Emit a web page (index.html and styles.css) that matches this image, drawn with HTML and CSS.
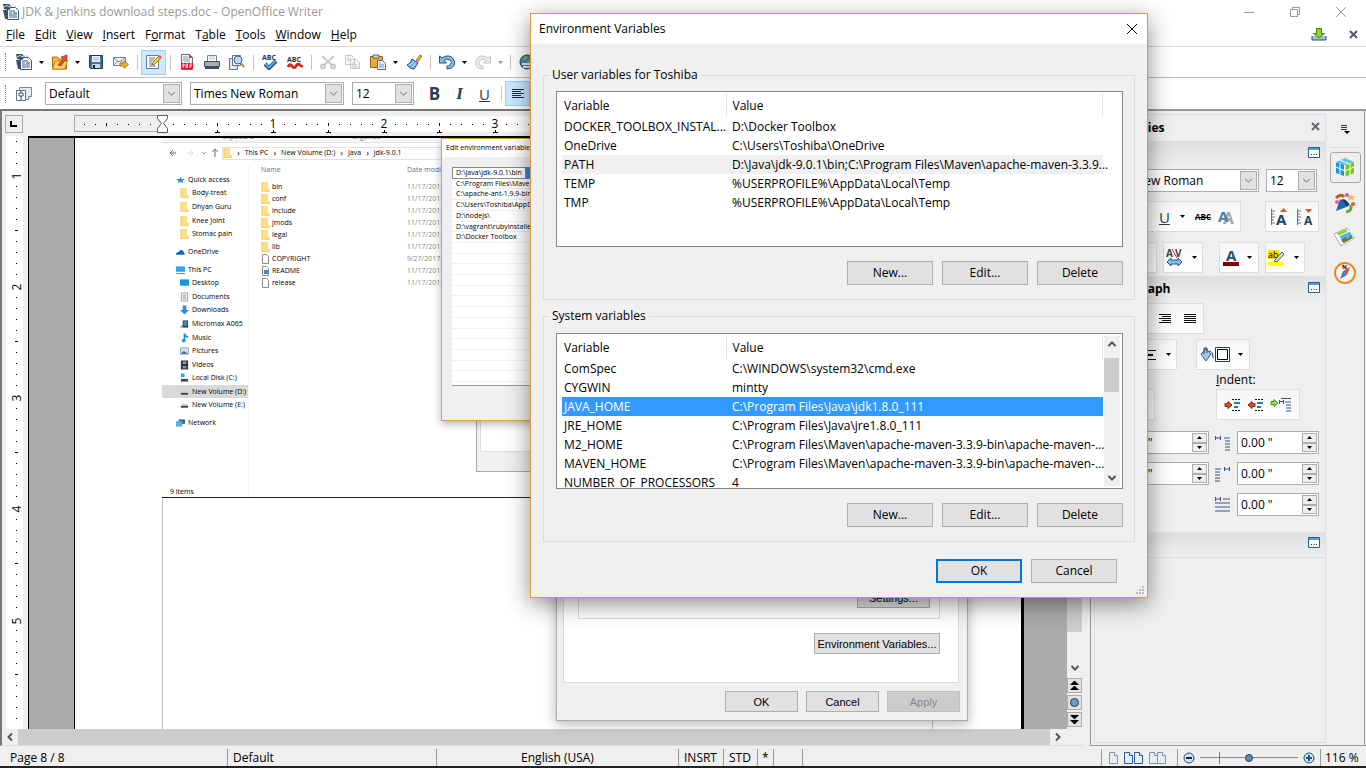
FILE: index.html
```html
<!DOCTYPE html>
<html lang="en">
<head>
    <meta charset="UTF-8">
    <meta name="viewport" content="width=device-width, initial-scale=1.0">
    <title>JDK &amp; Jenkins download steps.doc - OpenOffice Writer</title>
    <link rel="stylesheet" href="styles.css">
</head>
<body>
    <!-- shared icons -->
    <svg class="sprite" aria-hidden="true">
        <symbol id="doc" viewBox="0 0 16 16">
            <path d="M4.500 3.500h8l3 3v9h-11z" fill="#fff" stroke="#3c5468"/>
            <path d="M0 0h6l3 3-3 3-5-1zM0 6h4v9H2z" fill="#3b5566"/>
            <path d="M1 3q3-3 6 0M6 3q3-3 7 0" stroke="#c9d8e2" fill="none"/>
            <path d="M6 7h6M6 9h3M6 11h8M6 13h8" stroke="#3c5f86"/>
            <path d="M10 8h4v2h-4z" fill="#7fa6c7"/>
        </symbol>
        <symbol id="down" viewBox="0 0 5 3"><path d="M0 0h5L2.500 3z" fill="currentColor"/></symbol>
        <symbol id="up" viewBox="0 0 5 3"><path d="M0 3h5L2.500 0z" fill="currentColor"/></symbol>
        <symbol id="chev" viewBox="0 0 16 20"><path d="M4 8l4 4 4-4" fill="none" stroke="#555"/></symbol>
        <symbol id="chevdown" viewBox="0 0 16 16"><path d="M4.500 6L8 9.500 11.500 6" fill="none" stroke="#555" stroke-width="2"/></symbol>
        <symbol id="chevup" viewBox="0 0 16 16"><path d="M4.500 10L8 6.500 11.500 10" fill="none" stroke="#555" stroke-width="2"/></symbol>
        <symbol id="more" viewBox="0 0 12 11"><path d="M.5.5h11v10H.5z" fill="#fff" stroke="#2b5797"/><path d="M1 1h10v2H1z" fill="#5b9bd5"/><path d="M3 7h1v1H3zM5.500 7h1v1h-1zM8 7h1v1H8z" fill="#234"/></symbol>
        <symbol id="folder" viewBox="0 0 9 10"><path d="M1 0h6v7h1v3H1z" fill="#ffe08a"/><path d="M1 0v10h7V7" fill="none" stroke="#eec750"/></symbol>
        <symbol id="file" viewBox="0 0 9 10"><path d="M1.500.5h4l2 2v7h-6z" fill="#fff" stroke="#8a8a8a"/></symbol>
        <symbol id="drive" viewBox="0 0 10 10"><path d="M2 4h6l1 2H1z" fill="#ccc"/><path d="M1 6h8v2H1z" fill="#444"/></symbol>
        <symbol id="spacing" viewBox="0 0 16 16"><path d="M0 3h6M.5 1v4M5.500 1v4M9 3h6M10 6h5M10 9h5M10 12h5M10 15h5" stroke="#2f5687"/></symbol>
        <symbol id="pageicon" viewBox="0 0 9 12"><path d="M.5.5h5l3 3v8h-8z" fill="#e8eef5" stroke="currentColor"/><path d="M5.500.5v3h3" fill="#fff" stroke="currentColor"/></symbol>
    </svg>

    <header class="titlebar">
        <svg class="i16"><use href="#doc"/></svg>
        <span>JDK &amp; Jenkins download steps.doc - OpenOffice Writer</span>
        <div class="window-buttons">
            <button aria-label="Minimize"><svg width="12" height="12"><path d="M1 6.500h10" stroke="#999"/></svg></button>
            <button aria-label="Restore"><svg width="12" height="12"><path d="M1.500 3.500h7v7h-7zM3.500 3V1.500h7v7H9" fill="none" stroke="#999"/></svg></button>
            <button aria-label="Close"><svg width="12" height="12"><path d="M1 1l10 10M11 1L1 11" stroke="#999"/></svg></button>
        </div>
    </header>

    <nav class="menubar">
        <a href="#"><u>F</u>ile</a>
        <a href="#"><u>E</u>dit</a>
        <a href="#"><u>V</u>iew</a>
        <a href="#"><u>I</u>nsert</a>
        <a href="#">F<u>o</u>rmat</a>
        <a href="#">T<u>a</u>ble</a>
        <a href="#"><u>T</u>ools</a>
        <a href="#"><u>W</u>indow</a>
        <a href="#"><u>H</u>elp</a>
        <div class="menu-end">
            <button aria-label="Updates"><svg width="16" height="14"><path d="M1 8v4h14V8" fill="#9fc1de" stroke="#2f5475"/><path d="M5.500.5h5v5h3L8 10 2.500 5.500h3z" fill="#8fd424" stroke="#3d8410"/></svg></button>
            <button aria-label="Close document"><svg width="9" height="9"><path d="M1 1l7 7M8 1L1 8" stroke="#4d5b6b" stroke-width="2"/></svg></button>
        </div>
    </nav>

    <div class="toolbar">
        <span class="grip"></span>
        <button class="tool" aria-label="New"><svg class="i16"><use href="#doc"/></svg></button>
        <button class="drop" aria-label="New options"><svg><use href="#down"/></svg></button>
        <button class="tool" aria-label="Open"><svg class="i16" viewBox="0 0 16 16"><path d="M.5 15V3h5l1 2h8v10z" fill="#f6b73c" stroke="#b06d0c"/><path d="M.5 15l3-8h12l-3 8z" fill="#ffd267" stroke="#c98816"/><path d="M6 11l5-6-2-2 6-2v6l-2-1-4 6z" fill="#e5541f" stroke="#7e2409" stroke-width=".6"/></svg></button>
        <button class="drop" aria-label="Open options"><svg><use href="#down"/></svg></button>
        <button class="tool" aria-label="Save"><svg class="i16" viewBox="0 0 16 16"><path d="M1.500 1.500h13v13h-12l-1-1z" fill="#45749b" stroke="#1d3a52"/><path d="M4 2h8v6H4z" fill="#f2f6fa"/><path d="M5 4h6M5 6h6" stroke="#aac"/><path d="M4 10h8v4H4z" fill="#cdd6df"/><path d="M5 11h2v3H5z" fill="#123"/></svg></button>
        <button class="tool" aria-label="E-mail"><svg class="i16" viewBox="0 0 16 16"><path d="M.5 3.500h12v8H.5z" fill="#f4f7fb" stroke="#76879a"/><path d="M1 4l5 4 6-4M1 11l4-4M12 11L8 7" fill="none" stroke="#76879a"/><path d="M7 9h4V6.500l4.500 4-4.500 4V12H7z" fill="#f7ac2b" stroke="#a8620b" stroke-width=".8"/></svg></button>
        <span class="sep"></span>
        <button class="tool on" aria-label="Edit file"><svg class="i16" viewBox="0 0 16 16"><path d="M.5 1.500h12v13H.5z" fill="#fff" stroke="#667b90"/><path d="M3 4h6M3 6h5M3 8h3M3 10h3M3 12h7" stroke="#5d7995"/><path d="M6 11l1-3 6-6 2 2-6 6z" fill="#ffcf33" stroke="#7c5a12" stroke-width=".8"/><path d="M12 3l2-2 2 2-2 2z" fill="#ee5a7a"/></svg></button>
        <span class="sep"></span>
        <button class="tool" aria-label="Export as PDF"><svg class="i16" viewBox="0 0 16 16"><path d="M2.500.5h8l3 3v12h-11z" fill="#eef3f8" stroke="#5c6f83"/><path d="M4 3h5M4 5h7M4 7h7" stroke="#8aa0b8"/><path d="M10 0l4 4h-4z" fill="#e33"/><path d="M2 9h12v6H2z" fill="#e4141c"/><path d="M4 14v-4h1v2H4M7 10v3.500h1.500V10zM11 14v-4h2M11 12h2" stroke="#fff" fill="none" stroke-width=".9"/></svg></button>
        <button class="tool" aria-label="Print"><svg class="i16" viewBox="0 0 16 16"><path d="M3.500 1.500h9v6h-9z" fill="#fff" stroke="#7a8896"/><path d="M5 3h6M5 5h6" stroke="#b5c2ce"/><path d="M.5 7.500h15v5H.5z" fill="#a7b0b8" stroke="#3f4b57"/><path d="M1 12h14v3H1z" fill="#414d58"/><path d="M11 10h3" stroke="#78d13a"/></svg></button>
        <button class="tool" aria-label="Page preview"><svg class="i16" viewBox="0 0 16 16"><path d="M.5 4.500h8v11h-8z" fill="#dfe9f3" stroke="#5f7488"/><path d="M3.500 1.500h8v10h-8z" fill="#f5f8fb" stroke="#5f7488"/><circle cx="9" cy="6" r="4" fill="#b8dcf6" stroke="#49647f"/><path d="M12 9l3 4" stroke="#c77d18" stroke-width="2"/></svg></button>
        <span class="sep"></span>
        <button class="tool" aria-label="Spellcheck"><svg class="i16" viewBox="0 0 16 16"><text x="0" y="6" class="abc">ABC</text><path d="M3 10l4 4 7-7" fill="none" stroke="#174f86" stroke-width="4"/><path d="M3.500 10L7 13.500 13.500 7" fill="none" stroke="#58a9e8" stroke-width="2"/></svg></button>
        <button class="tool" aria-label="AutoSpellcheck"><svg class="i16" viewBox="0 0 16 16"><text x="0" y="8" class="abc">ABC</text><path d="M1 13q2-4 4-1t4 0 4-1 2 0" fill="none" stroke="#dc2416" stroke-width="3"/></svg></button>
        <span class="sep"></span>
        <button class="tool" aria-label="Cut" disabled><svg class="i16" viewBox="0 0 16 16"><path d="M2 2l10 9M14 2L4 11" stroke="#c9c9c9" stroke-width="2"/><circle cx="3" cy="12.500" r="2" fill="none" stroke="#c9c9c9" stroke-width="2"/><circle cx="13" cy="12.500" r="2" fill="none" stroke="#c9c9c9" stroke-width="2"/></svg></button>
        <button class="tool" aria-label="Copy" disabled><svg class="i16" viewBox="0 0 16 16"><path d="M.5 1.500h6l3 3v6h-9zM5.500 5.500h6l3 3v6h-9z" fill="#f6f6f6" stroke="#c6c6c6"/><path d="M2 4h3M2 6h3M7 9h3M7 11h5M7 13h5" stroke="#c6c6c6"/></svg></button>
        <button class="tool" aria-label="Paste"><svg class="i16" viewBox="0 0 16 16"><path d="M.5 2.500h12v11H.5z" fill="#eea636" stroke="#9a6413"/><path d="M3 1h6v3H3z" fill="#d3d8dd" stroke="#57626c"/><path d="M7.500 6.500h5l3 3v6h-8z" fill="#f3f8fd" stroke="#406b96"/><path d="M9 9h2M9 11h5M9 13h5" stroke="#5b8dc0"/></svg></button>
        <button class="drop" aria-label="Paste options"><svg><use href="#down"/></svg></button>
        <button class="tool" aria-label="Format paintbrush"><svg class="i16" viewBox="0 0 16 16"><path d="M10 6l4-5 2 1-4 6z" fill="#f0a22c" stroke="#95600f" stroke-width=".7"/><path d="M6 5l6 4-4 6q-4 0-7-4 4-1 5-6z" fill="#6fb1ee" stroke="#1e4f91"/><path d="M3 11q3-1 5-4M6 13q3-2 4-4" fill="none" stroke="#d9ecfc"/></svg></button>
        <span class="sep"></span>
        <button class="tool" aria-label="Undo"><svg class="i16" viewBox="0 0 16 16"><path d="M.5 2v7h7L5 6.500Q8 4 11 6t0 5q-1 1-3 1v3q5 0 7-3.500t-1-7Q10-.5 3 4z" fill="#86bdea" stroke="#23507c"/></svg></button>
        <button class="drop" aria-label="Undo options"><svg><use href="#down"/></svg></button>
        <button class="tool" aria-label="Redo" disabled><svg class="i16" viewBox="0 0 16 16"><path d="M15.500 2v7h-7L11 6.500Q8 4 5 6t0 5q1 1 3 1v3q-5 0-7-3.500t1-7Q6-.5 13 4z" fill="#ececec" stroke="#c6c6c6"/></svg></button>
        <button class="drop dim" aria-label="Redo options" disabled><svg><use href="#down"/></svg></button>
        <span class="sep"></span>
        <button class="tool" aria-label="Hyperlink"><svg class="i16" viewBox="0 0 16 16"><circle cx="8" cy="8" r="7" fill="#3f86c0" stroke="#1f4464"/><path d="M3 5q3-4 6-2L6 7zM8 7l5-1q1 4-3 5z" fill="#7cb342"/><path d="M3 10h9M4 13h8" stroke="#e8eef4" stroke-width="2"/></svg></button>
    </div>

    <div class="toolbar format">
        <span class="grip"></span>
        <button class="tool" aria-label="Styles and formatting"><svg class="i16" viewBox="0 0 16 16"><path d="M3.500 1.500h12v9l-3 3h-9z" fill="#e6ebf0" stroke="#7b8a99"/><path d="M12.500 13.500v-3h3" fill="#fff" stroke="#7b8a99"/><path d="M.5 4.500h9v10h-9z" fill="#fff" stroke="#5f7082"/><path d="M3 7h4v3H3zM5 10v4M5 5v2" fill="none" stroke="#3b5064"/></svg></button>
        <div class="combo style-combo"><select aria-label="Apply style"><option>Default</option></select><svg><use href="#chev"/></svg></div>
        <div class="combo font-combo"><select aria-label="Font name"><option>Times New Roman</option></select><svg><use href="#chev"/></svg></div>
        <div class="combo size-combo"><select aria-label="Font size"><option>12</option></select><svg><use href="#chev"/></svg></div>
        <button class="tool letter bold">B</button>
        <button class="tool letter italic">I</button>
        <button class="tool letter under">U</button>
        <span class="sep"></span>
        <button class="tool on" aria-label="Align left"><svg class="i16" viewBox="0 0 16 16"><path d="M2 3.500h12M2 5.500h9M2 7.500h12M2 9.500h9M2 11.500h12" stroke="#222e3a"/></svg></button>
    </div>

    <main class="main">
        <section class="editor">
            <div class="hruler">
                <button class="tabstop" aria-label="Tab type"><svg width="8" height="8"><path d="M1 1v5h6" fill="none" stroke="#000" stroke-width="2"/></svg></button>
                <svg class="hscale">
                    <defs>
                        <pattern id="hdots" x="88" y="0" width="111" height="18" patternUnits="userSpaceOnUse">
                            <path d="M11 9h1v1h-1zM22 9h1v1h-1zM33 9h1v1h-1zM44 9h1v1h-1zM55 8h1v3h-1zM66 9h1v1h-1zM77 9h1v1h-1zM88 9h1v1h-1zM99 9h1v1h-1z"/>
                            <path d="M53 17h5v1h-5zM55 15h1v2h-1zM109 17h2v1h-2zM0 17h3v1H0zM0 15h1v2H0z"/>
                        </pattern>
                    </defs>
                    <rect x="88" y="1" width="100%" height="16" fill="#fff"/>
                    <rect x="0.500" y="0.500" width="88" height="16" fill="#efefef" stroke="#aaa"/>
                    <rect x="0" y="0" width="80" height="14" fill="url(#hdots)"/>
                    <rect x="95" y="0" width="100%" height="18" fill="url(#hdots)"/>
                    <text x="199" y="13">1</text>
                    <text x="310" y="13">2</text>
                    <text x="421" y="13">3</text>
                    <path d="M83.500.5h10v3l-4 5 4 5v4h-10v-4l4-5-4-5z" fill="#fff" stroke="#555"/>
                </svg>
            </div>
            <div class="work">
                <svg class="vruler">
                    <defs>
                        <pattern id="vdots" x="6" y="-72" width="16" height="111" patternUnits="userSpaceOnUse">
                            <path d="M8 11h1v1H8zM8 22h1v1H8zM8 33h1v1H8zM8 44h1v1H8zM7 55h3v1H7zM8 66h1v1H8zM8 77h1v1H8zM8 88h1v1H8zM8 99h1v1H8z"/>
                        </pattern>
                    </defs>
                    <rect x="4" width="17" height="100%" fill="#fff"/>
                    <rect x="4" width="16" height="100%" fill="url(#vdots)"/>
                    <text transform="translate(19 40) rotate(-90)">1</text>
                    <text transform="translate(19 151) rotate(-90)">2</text>
                    <text transform="translate(19 262) rotate(-90)">3</text>
                    <text transform="translate(19 373) rotate(-90)">4</text>
                    <text transform="translate(19 485) rotate(-90)">5</text>
                </svg>
                <div class="canvas">
                    <article class="page">
                        <!-- picture pasted in the document -->
                        <div class="shot">
                            <div class="ribbon"><span>Clipboard</span><span>Organize</span></div>
                            <div class="address">
                                <svg width="52" height="10"><path d="M7 5H1M4 2L1 5l3 3" fill="none" stroke="#666"/><path d="M18 5h6M21 2l3 3-3 3" fill="none" stroke="#ddd"/><path d="M33 4l2 2 2-2" fill="none" stroke="#999"/><path d="M46 9V1M43 4l3-3 3 3" fill="none" stroke="#666"/></svg>
                                <div class="crumbs"><svg class="mini"><use href="#folder"/></svg><i>&rsaquo;</i>This PC<i>&rsaquo;</i>New Volume (D:)<i>&rsaquo;</i>Java<i>&rsaquo;</i>jdk-9.0.1</div>
                            </div>
                            <div class="explorer">
                                <div class="tree">
                                    <ul class="quick">
                                        <li class="top"><svg class="mini" viewBox="0 0 10 10"><path d="M5 1l1 3h4L7 6l1 3-3-2-3 2 1-3-3-2h4z" fill="#2a8dd8"/></svg>Quick access</li>
                                        <li><svg class="mini"><use href="#folder"/></svg>Body-treat</li>
                                        <li><svg class="mini"><use href="#folder"/></svg>Dhyan Guru</li>
                                        <li><svg class="mini"><use href="#folder"/></svg>Knee Joint</li>
                                        <li><svg class="mini"><use href="#folder"/></svg>Stomac pain</li>
                                    </ul>
                                    <ul class="single">
                                        <li class="top"><svg class="mini" viewBox="0 0 10 10"><path d="M0 8q0-3 3-3 2-4 5-1l2 4z" fill="#1466b8"/></svg>OneDrive</li>
                                    </ul>
                                    <ul class="pc">
                                        <li class="top"><svg class="mini" viewBox="0 0 10 10"><path d="M0 1h10v6H0z" fill="#3aa3e8"/><path d="M0 9h10" stroke="#678"/></svg>This PC</li>
                                        <li><svg class="mini" viewBox="0 0 10 10"><path d="M0 1h10v7H0z" fill="#1694ea"/></svg>Desktop</li>
                                        <li><svg class="mini" viewBox="0 0 10 10"><path d="M1.500.5h7v9h-7z" fill="#fff" stroke="#999"/><path d="M3 3h4M3 5h4M3 7h4" stroke="#69a"/></svg>Documents</li>
                                        <li><svg class="mini" viewBox="0 0 10 10"><path d="M3 0h4v5h3L5 10 0 5h3z" fill="#2e8ae0"/></svg>Downloads</li>
                                        <li><svg class="mini" viewBox="0 0 10 10"><path d="M3 1h6v8H3z" fill="#345"/><path d="M4 2h4v5H4z" fill="#48b"/><path d="M0 9l3-4v4z" fill="#888"/></svg>Micromax A065</li>
                                        <li><svg class="mini" viewBox="0 0 10 10"><path d="M5 8V0q0 3 4 4" fill="none" stroke="#1592e8" stroke-width="2"/><circle cx="4" cy="8" r="2" fill="#1592e8"/></svg>Music</li>
                                        <li><svg class="mini" viewBox="0 0 10 10"><path d="M.5 1.500h9v7h-9z" fill="#cfe6f7" stroke="#999"/><path d="M1 8l3-3 5 3z" fill="#37658a"/></svg>Pictures</li>
                                        <li><svg class="mini" viewBox="0 0 10 10"><path d="M1 0h8v10H1z" fill="#333"/><path d="M3 1h4v3H3zM3 6h4v3H3z" fill="#79b"/></svg>Videos</li>
                                        <li><svg class="mini" viewBox="0 0 10 10"><path d="M1 0h4v4H1z" fill="#29abe2"/><path d="M1 6h8v3H1z" fill="#444"/></svg>Local Disk (C:)</li>
                                        <li class="picked"><svg class="mini"><use href="#drive"/></svg>New Volume (D:)</li>
                                        <li><svg class="mini"><use href="#drive"/></svg>New Volume (E:)</li>
                                    </ul>
                                    <ul class="single">
                                        <li class="top"><svg class="mini" viewBox="0 0 10 10"><path d="M3 1h7v5H3z" fill="#467"/><path d="M0 3h7v6H0z" fill="#4db2ec"/></svg>Network</li>
                                    </ul>
                                    <p class="count">9 items</p>
                                </div>
                                <table class="files">
                                    <thead><tr><th>Name</th><th>Date modif</th></tr></thead>
                                    <tbody>
                                        <tr><td><svg class="mini"><use href="#folder"/></svg>bin</td><td>11/17/2017</td></tr>
                                        <tr><td><svg class="mini"><use href="#folder"/></svg>conf</td><td>11/17/2017</td></tr>
                                        <tr><td><svg class="mini"><use href="#folder"/></svg>include</td><td>11/17/2017</td></tr>
                                        <tr><td><svg class="mini"><use href="#folder"/></svg>jmods</td><td>11/17/2017</td></tr>
                                        <tr><td><svg class="mini"><use href="#folder"/></svg>legal</td><td>11/17/2017</td></tr>
                                        <tr><td><svg class="mini"><use href="#folder"/></svg>lib</td><td>11/17/2017</td></tr>
                                        <tr><td><svg class="mini"><use href="#file"/></svg>COPYRIGHT</td><td>9/27/2017 9</td></tr>
                                        <tr><td><svg class="mini"><use href="#file"/><path d="M3 4h4v4H3z" fill="#2b8be0"/></svg>README</td><td>11/17/2017</td></tr>
                                        <tr><td><svg class="mini"><use href="#file"/></svg>release</td><td>11/17/2017</td></tr>
                                    </tbody>
                                </table>
                            </div>
                            <div class="props-win"><div></div></div>
                            <div class="edit-win">
                                <p>Edit environment variable</p>
                                <ul>
                                    <li class="editing">D:\Java\jdk-9.0.1\bin</li>
                                    <li>C:\Program Files\Maven\</li>
                                    <li>C:\apache-ant-1.9.9-bin\</li>
                                    <li>C:\Users\Toshiba\AppDa</li>
                                    <li>D:\nodejs\</li>
                                    <li>D:\vagrant\rubyinstaller-</li>
                                    <li>D:\Docker Toolbox</li>
                                    <li></li><li></li><li></li><li></li><li></li><li></li>
                                    <li></li><li></li><li></li><li></li><li></li><li></li><li></li>
                                </ul>
                            </div>
                        </div>
                        <div class="text-area"></div>
                    </article>
                </div>
                <div class="vscroll">
                    <div class="thumb"></div>
                    <svg class="i16"><use href="#chevdown"/></svg>
                    <button aria-label="Previous page"><svg width="9" height="9"><path d="M4 0h1l4 4H0zM4 5h1l4 4H0z"/></svg></button>
                    <button aria-label="Navigation"><svg width="9" height="9"><circle cx="4.500" cy="4.500" r="4" fill="#6b9cc4" stroke="#1f3c55"/></svg></button>
                    <button aria-label="Next page"><svg width="9" height="9"><path d="M0 0h9L5 4H4zM0 5h9L5 9H4z"/></svg></button>
                </div>
            </div>
            <div class="hscroll">
                <svg class="i16" viewBox="0 0 16 16"><path d="M10 4.500L6.500 8l3.500 3.500" fill="none" stroke="#555" stroke-width="2"/></svg>
                <div class="thumb"></div>
                <svg class="i16" viewBox="0 0 16 16"><path d="M6 4.500L9.500 8 6 11.500" fill="none" stroke="#555" stroke-width="2"/></svg>
            </div>
        </section>

        <aside class="sidebar">
            <div class="deck">
                <div class="deck-title"><b>Properties</b><button aria-label="Close sidebar"><svg width="9" height="9"><path d="M1 1l7 7M8 1L1 8" stroke="#5d6873" stroke-width="2"/></svg></button></div>
                <h2><span></span><svg class="more"><use href="#more"/></svg></h2>
                <div class="row fonts">
                    <div class="combo grow"><select aria-label="Sidebar font name"><option>Times New Roman</option></select><svg><use href="#chev"/></svg></div>
                    <div class="combo side-size"><select aria-label="Sidebar font size"><option>12</option></select><svg><use href="#chev"/></svg></div>
                </div>
                <div class="row spread">
                    <div class="group grow end">
                        <button class="letter under">U</button>
                        <button class="drop" aria-label="Underline options"><svg><use href="#down"/></svg></button>
                        <button><s class="strike">ABC</s></button>
                        <button aria-label="Shadow"><svg width="16" height="18"><path d="M5 16l4-12h3l4 12h-3l-1-3H9l-1 3zM10 10h2l-1-3z" fill="#aaa"/><text x="0" y="14" class="bigA" fill="#4a7fa8">A</text></svg></button>
                    </div>
                    <div class="group wide">
                        <button aria-label="Grow font"><svg width="18" height="18"><path d="M1.500 1v16M1 3h4M1 6h3M1 9h4M1 12h3M1 15h4" stroke="#5c7890"/><text x="6" y="17" class="bigA" fill="#24415c">A</text><path d="M10 4h7l-3.500-4z" fill="#e8502a"/></svg></button>
                        <button aria-label="Shrink font"><svg width="18" height="18"><path d="M1.500 1v16M1 3h4M1 6h3M1 9h4M1 12h3M1 15h4" stroke="#5c7890"/><text x="8" y="17" class="medA" fill="#24415c">A</text><path d="M9 1h7l-3.500 4z" fill="#e8502a"/></svg></button>
                    </div>
                </div>
                <div class="row colors">
                    <div class="group grow"></div>
                    <div class="group pair">
                        <button aria-label="Spacing"><svg width="18" height="18"><text x="0" y="8" class="smallA" fill="#444">A</text><text x="9" y="8" class="smallA" fill="#444">V</text><path d="M6 0l5 9" stroke="#d22"/><path d="M1 13l4-4v2h7V9l4 4-4 4v-2H5v2z" fill="#7ec0ee" stroke="#215a8c"/></svg></button>
                        <button class="drop" aria-label="Spacing options"><svg><use href="#down"/></svg></button>
                    </div>
                    <div class="group pair font-color">
                        <button aria-label="Font color"><svg width="16" height="18"><text x="3" y="12" class="bigA" fill="#2b4d6b">A</text><path d="M0 13h16v4H0z" fill="#800000"/></svg></button>
                        <button class="drop" aria-label="Font color options"><svg><use href="#down"/></svg></button>
                    </div>
                    <div class="group pair">
                        <button aria-label="Highlighting"><svg width="18" height="18"><path d="M0 1h11v9H0z" fill="#ffd92e"/><text x="0" y="9" class="ab">ab</text><path d="M6 12l8-9 2 2-7 8z" fill="#ddd" stroke="#555"/><path d="M0 13h16v4H0z" fill="#ff0"/></svg></button>
                        <button class="drop" aria-label="Highlighting options"><svg><use href="#down"/></svg></button>
                    </div>
                </div>
                <h2 class="para"><span>Paragraph</span><svg class="more"><use href="#more"/></svg></h2>
                <div class="row align-row">
                    <div class="group grow end">
                        <button aria-label="Align right"><svg width="13" height="12"><path d="M0 1.500h12M3 3.500h9M0 5.500h12M3 7.500h9M0 9.500h12" stroke="#111"/></svg></button>
                        <button aria-label="Justify"><svg width="13" height="12"><path d="M0 1.500h12M0 3.500h12M0 5.500h12M0 7.500h12M0 9.500h12" stroke="#111"/></svg></button>
                    </div>
                </div>
                <div class="row fill-row">
                    <div class="group grow end">
                        <button aria-label="Numbering"><svg width="9" height="12"><path d="M0 1.500h9M0 5.500h6M0 6.500h6M0 10.500h9" stroke="#111"/></svg></button>
                        <button class="drop" aria-label="Numbering options"><svg><use href="#down"/></svg></button>
                    </div>
                    <div class="group wide">
                        <button aria-label="Paragraph background"><svg width="30" height="16"><path d="M1 7l5-5 5 5-5 7z" fill="#a6c8ee" stroke="#355d92"/><path d="M4 7V1h3v5M9 4q4 0 4 7" fill="none" stroke="#23374d"/><path d="M15.500.5h14v14h-14z" fill="#fff" stroke="#1f3c73"/><path d="M17.500 2.500h10v10h-10z" fill="#fff" stroke="#000"/></svg></button>
                        <button class="drop" aria-label="Background options"><svg><use href="#down"/></svg></button>
                    </div>
                </div>
                <p class="indent-label"><u>I</u>ndent:</p>
                <div class="row indent-row">
                    <div class="group grow"></div>
                    <div class="group indents">
                        <button aria-label="Increase indent"><svg width="17" height="14"><path d="M8 1.500h9M8 12.500h9" stroke="#111" stroke-dasharray="2 1"/><path d="M10 5h6M10 9h4" stroke="#1b7fc4" stroke-width="2"/><path d="M1 5.500h3v-2l4 3.500-4 3.500v-2H1z" fill="#e0562c" stroke="#7d2309"/></svg></button>
                        <button aria-label="Decrease indent"><svg width="17" height="14"><path d="M8 1.500h9M8 12.500h9" stroke="#111" stroke-dasharray="2 1"/><path d="M10 5h6M10 9h4" stroke="#1b7fc4" stroke-width="2"/><path d="M8 5.500H5v-2L1 7l4 3.500v-2h3z" fill="#e0562c" stroke="#7d2309"/></svg></button>
                        <button aria-label="Hanging indent"><svg width="22" height="16"><path d="M1 4.500h3v-2L8 6 4 9.500v-2H1z" fill="#9be04a" stroke="#3f8a12"/><path d="M9 4.500h4M9.500 3v4M13.500 3v4M11 1.500h10M15 5h6M16 8h5M16 11h5M16 14h5" stroke="#2f5687"/></svg></button>
                    </div>
                </div>
                <div class="row spins">
                    <div class="spin grow"><input type="text" value='0.00 "' aria-label="Above"><span><button aria-label="Up"><svg><use href="#up"/></svg></button><button aria-label="Down"><svg><use href="#down"/></svg></button></span></div>
                    <svg class="i16"><use href="#spacing"/></svg>
                    <div class="spin fixed"><input type="text" value='0.00 "' aria-label="Before text"><span><button aria-label="Up"><svg><use href="#up"/></svg></button><button aria-label="Down"><svg><use href="#down"/></svg></button></span></div>
                </div>
                <div class="row spins">
                    <div class="spin grow"><input type="text" value='0.00 "' aria-label="Below"><span><button aria-label="Up"><svg><use href="#up"/></svg></button><button aria-label="Down"><svg><use href="#down"/></svg></button></span></div>
                    <svg class="i16" viewBox="0 0 16 16"><path d="M0 3h6M9 3h6M9.500 1v4M14.500 1v4M0 6h5M0 9h5M0 12h5M0 15h5" stroke="#2f5687"/></svg>
                    <div class="spin fixed"><input type="text" value='0.00 "' aria-label="After text"><span><button aria-label="Up"><svg><use href="#up"/></svg></button><button aria-label="Down"><svg><use href="#down"/></svg></button></span></div>
                </div>
                <div class="row spins">
                    <svg class="i16" viewBox="0 0 16 16"><path d="M0 2h6M.5 0v4M5.500 0v4M8 2h7M0 6h15M0 10h15M0 14h15" stroke="#2f5687"/></svg>
                    <div class="spin fixed"><input type="text" value='0.00 "' aria-label="First line"><span><button aria-label="Up"><svg><use href="#up"/></svg></button><button aria-label="Down"><svg><use href="#down"/></svg></button></span></div>
                </div>
                <h2 class="last"><span></span><svg class="more"><use href="#more"/></svg></h2>
            </div>
            <div class="tabs">
                <button class="tabs-menu" aria-label="Sidebar settings"><svg width="10" height="10"><path d="M1 1.500h6M1 3.500h6M1 5.500h6" stroke="#334"/><path d="M4 7h6L7 10z"/></svg></button>
                <button class="current" aria-label="Properties"><svg width="22" height="22" viewBox="0 0 22 22"><path d="M2 6l8-4v17l-8-3z" fill="#1a95e0"/><path d="M11 8l9-3v11l-9 4z" fill="#76c91d"/><path d="M2 5l9-4 9 4-9 3z" fill="#5ec4f4"/><path d="M2 10l9 4 9-4M11 8v12M6 6v12M16 6v12M6 3l9 4" fill="none" stroke="#fff"/></svg></button>
                <button aria-label="Styles"><svg width="22" height="22" viewBox="0 0 22 22"><path d="M2 19L6 7l9 7z" fill="#1769b0"/><path d="M7 8q4-3 9 5l-3 1q-4-5-6-6z" fill="#173a63"/><path d="M2 6q5-5 8-1" fill="none" stroke="#c2591b" stroke-width="3"/><path d="M12 20q6-1 5-7" fill="none" stroke="#6cab25" stroke-width="3"/><path d="M17 2l1 2h3l-2 2 1 3-3-2-3 2 1-3-2-2h3z" fill="#f8c02f"/><circle cx="13" cy="3" r="2" fill="#b45ad6"/><circle cx="3" cy="10" r="2" fill="#ef5f8d"/><circle cx="19" cy="12" r="2" fill="#ee5450"/></svg></button>
                <button aria-label="Gallery"><svg width="24" height="22" viewBox="0 0 24 22"><path d="M1 7l13-6 8 10-14 8z" fill="#fff" stroke="#aaa"/><path d="M4 6l9-4 2 4-8 5z" fill="#8fd244"/><path d="M6 9l11-5 4 7-11 6z" fill="#58b2ea" stroke="#fff"/><path d="M8 13l5-3 2 2 3-4 2 3-9 5z" fill="#6f7f2c"/></svg></button>
                <button aria-label="Navigator"><svg width="24" height="24" viewBox="0 0 24 24"><circle cx="12" cy="12" r="10" fill="#f2f4f6" stroke="#f08a1d" stroke-width="2"/><path d="M17 6l-3 8-4-4z" fill="#e04a2f"/><path d="M7 18l3-8 4 4z" fill="#3a7fc0"/><text x="9" y="8" class="north">N</text></svg></button>
            </div>
        </aside>
    </main>

    <footer class="status">
        <span class="s-page">Page 8 / 8</span>
        <span class="s-style">Default</span>
        <span class="s-lang">English (USA)</span>
        <span class="s-mode">INSRT</span>
        <span class="s-sel">STD</span>
        <span class="s-mod">*</span>
        <span class="s-sign"></span>
        <span class="s-rest"></span>
        <span class="s-view">
            <svg width="9" height="12" class="gray"><use href="#pageicon"/></svg>
            <svg width="19" height="12" class="blue"><use href="#pageicon" width="9"/><use href="#pageicon" x="10" width="9"/></svg>
            <svg width="17" height="12" class="gray"><use href="#pageicon" width="9"/><use href="#pageicon" x="8" width="9"/></svg>
        </span>
        <span class="s-zoom">
            <button aria-label="Zoom out"><svg width="12" height="12"><circle cx="6" cy="6" r="5" fill="#cfe5f5" stroke="#234e70"/><path d="M3 6h6" stroke="#123" stroke-width="2"/></svg></button>
            <input type="range" min="0" max="100" value="50" aria-label="Zoom">
            <button aria-label="Zoom in"><svg width="12" height="12"><circle cx="6" cy="6" r="5" fill="#cfe5f5" stroke="#234e70"/><path d="M3 6h6M6 3v6" stroke="#1a5a94" stroke-width="2"/></svg></button>
        </span>
        <span class="s-percent">116 %</span>
    </footer>

    <!-- System Properties, behind the variables dialog -->
    <div class="dialog sysprops">
        <div class="panel">
            <div class="box"><button>Settings...</button></div>
            <button class="env">Environment Variables...</button>
        </div>
        <div class="buttons">
            <button>OK</button>
            <button>Cancel</button>
            <button disabled>Apply</button>
        </div>
    </div>

    <div class="dialog envvars" role="dialog" aria-label="Environment Variables">
        <div class="dialog-title">Environment Variables<button aria-label="Close dialog"><svg width="12" height="12"><path d="M1 1l10 10M11 1L1 11" stroke="#000"/></svg></button></div>
        <div class="dialog-body">
            <fieldset>
                <legend>User variables for Toshiba</legend>
                <div class="list">
                    <table>
                        <thead><tr><th class="name">Variable</th><th>Value</th></tr></thead>
                        <tbody>
                            <tr><td>DOCKER_TOOLBOX_INSTAL...</td><td>D:\Docker Toolbox</td></tr>
                            <tr><td>OneDrive</td><td>C:\Users\Toshiba\OneDrive</td></tr>
                            <tr class="hover"><td>PATH</td><td>D:\Java\jdk-9.0.1\bin;C:\Program Files\Maven\apache-maven-3.3.9...</td></tr>
                            <tr><td>TEMP</td><td>%USERPROFILE%\AppData\Local\Temp</td></tr>
                            <tr><td>TMP</td><td>%USERPROFILE%\AppData\Local\Temp</td></tr>
                        </tbody>
                    </table>
                    <div class="gutter"></div>
                </div>
                <div class="buttons">
                    <button>New...</button>
                    <button>Edit...</button>
                    <button>Delete</button>
                </div>
            </fieldset>
            <fieldset>
                <legend>System variables</legend>
                <div class="list">
                    <table>
                        <thead><tr><th class="name">Variable</th><th>Value</th></tr></thead>
                        <tbody>
                            <tr><td>ComSpec</td><td>C:\WINDOWS\system32\cmd.exe</td></tr>
                            <tr><td>CYGWIN</td><td>mintty</td></tr>
                            <tr class="selected"><td>JAVA_HOME</td><td>C:\Program Files\Java\jdk1.8.0_111</td></tr>
                            <tr><td>JRE_HOME</td><td>C:\Program Files\Java\jre1.8.0_111</td></tr>
                            <tr><td>M2_HOME</td><td>C:\Program Files\Maven\apache-maven-3.3.9-bin\apache-maven-...</td></tr>
                            <tr><td>MAVEN_HOME</td><td>C:\Program Files\Maven\apache-maven-3.3.9-bin\apache-maven-...</td></tr>
                            <tr><td>NUMBER_OF_PROCESSORS</td><td>4</td></tr>
                        </tbody>
                    </table>
                    <div class="gutter bar">
                        <svg class="i16"><use href="#chevup"/></svg>
                        <div class="thumb"></div>
                        <svg class="i16"><use href="#chevdown"/></svg>
                    </div>
                </div>
                <div class="buttons">
                    <button>New...</button>
                    <button>Edit...</button>
                    <button>Delete</button>
                </div>
            </fieldset>
            <div class="buttons confirm">
                <button class="default">OK</button>
                <button>Cancel</button>
            </div>
        </div>
        <svg class="resize" width="9" height="9"><path d="M6 0h2v2H6zM3 3h2v2H3zM6 3h2v2H6zM0 6h2v2H0zM3 6h2v2H3zM6 6h2v2H6z" fill="#bbb"/></svg>
    </div>
</body>
</html>
```
FILE: styles.css
```css
* {
    box-sizing: border-box;
}
body {
    margin: 0;
    height: 100vh;
    display: flex;
    flex-direction: column;
    overflow: hidden;
    position: relative;
    background-color: #fff;
    color: #000;
    font-family: "Open Sans", "Noto Sans", sans-serif;
    font-size: 12px;
    line-height: 16px;
}
button, input, select {
    font: inherit;
    color: inherit;
}
button {
    padding: 0;
    border: 0;
    background: none;
    display: flex;
    align-items: center;
    justify-content: center;
    white-space: nowrap;
}
svg {
    display: block;
    flex: none;
}
ul, p, h2 {
    margin: 0;
    padding: 0;
    list-style: none;
}
.sprite {
    display: none;
}
.i16 {
    width: 16px;
    height: 16px;
}

/* title and menu */
.titlebar {
    height: 23px;
    display: flex;
    align-items: center;
    gap: 3px;
    padding: 0 19px 0 3px;
    color: #999;
}
.window-buttons {
    margin-left: auto;
    display: flex;
    gap: 34px;
}
.menubar {
    height: 24px;
    display: flex;
    align-items: center;
    padding-left: 1px;
    border-bottom: 1px solid #d7d7d7;
}
.menubar a {
    color: #000;
    text-decoration: none;
    padding: 0 5px;
}
.menu-end {
    margin-left: auto;
    display: flex;
    align-items: center;
    gap: 22px;
    padding-right: 8px;
}

/* toolbars */
.toolbar {
    height: 31px;
    display: flex;
    align-items: center;
    border-bottom: 1px solid #bdbdbd;
}
.grip {
    width: 1px;
    height: 18px;
    margin: 0 5px;
    border-left: 1px dotted #777;
}
.tool {
    width: 25px;
    height: 25px;
}
.tool.on {
    background-color: #cce8ff;
    border: 1px solid #99d1ff;
}
.drop {
    width: 11px;
    height: 25px;
}
.drop svg, .spin span svg {
    width: 5px;
    height: 3px;
}
.drop.dim {
    color: #999;
}
.sep {
    width: 1px;
    height: 15px;
    margin: 0 3px 0 4px;
    background-color: #c6c6c6;
}
.abc {
    font: bold 7px "Open Sans", sans-serif;
    fill: #22384c;
}
.format {
    border-bottom: 0;
}
.combo {
    height: 23px;
    padding: 1px;
    display: flex;
    border: 1px solid #ababb3;
    background-color: #fff;
}
.combo select {
    flex: 1;
    min-width: 0;
    appearance: none;
    border: 0;
    padding: 0 2px;
    background: none;
}
.combo svg {
    width: 17px;
    height: 19px;
    background-color: #e1e1e1;
    border: 1px solid #adadad;
}
.style-combo {
    width: 137px;
    margin: 0 8px 0 9px;
}
.font-combo {
    width: 154px;
    margin-right: 8px;
}
.size-combo {
    width: 62px;
    margin-right: 8px;
}
.letter {
    font-size: 17px;
    color: #2a3e52;
}
.bold {
    font-weight: bold;
}
.italic {
    font-family: "Liberation Serif", serif;
    font-style: italic;
    font-weight: bold;
}
.under {
    text-decoration: underline;
    font-size: 15px;
}

/* editor */
.main {
    flex: 1;
    min-height: 0;
    display: flex;
    gap: 7px;
    background-color: #efefef;
}
.editor {
    flex: 1;
    min-width: 0;
    display: flex;
    flex-direction: column;
    border-top: 2px solid #777;
    border-left: 2px solid #777;
    border-bottom: 1px solid #ddd;
}
.hruler {
    height: 25px;
    display: flex;
    align-items: center;
    gap: 51px;
    padding-left: 3px;
}
.tabstop {
    width: 18px;
    height: 18px;
    border: 1px solid #aaa;
}
.hscale {
    flex: 1;
    min-width: 0;
    height: 18px;
}
.hscale text, .vruler text {
    text-anchor: middle;
}
.work {
    flex: 1;
    min-height: 0;
    display: flex;
}
.vruler {
    width: 26px;
    height: 100%;
}
.canvas {
    flex: 1;
    min-width: 0;
    padding: 0 43px 0 45px;
    border-top: 2px solid #000;
    border-left: 1px solid #000;
    background-color: #ababab;
}
.page {
    height: 100%;
    display: flex;
    flex-direction: column;
    padding-left: 87px;
    padding-right: 88px;
    border-left: 1px solid #000;
    border-right: 3px solid #000;
    background-color: #fff;
    overflow: hidden;
}
.text-area {
    flex: 1;
    border: 1px solid #c0c0c0;
    border-top: 0;
    border-bottom: 0;
}
.vscroll {
    width: 16px;
    display: flex;
    flex-direction: column;
    justify-content: flex-end;
    gap: 2px;
    padding: 0 1px 2px 0;
}
.thumb {
    background-color: #cdcdcd;
}
.vscroll .thumb {
    height: 80px;
    margin-bottom: 26px;
}
.vscroll button {
    width: 15px;
    height: 15px;
    border: 1px solid #adadad;
    background-color: #e1e1e1;
}
.hscroll {
    height: 16px;
    display: flex;
    padding-right: 17px;
}
.hscroll .thumb {
    flex: 1;
}

/* pasted explorer picture */
.shot {
    height: 360px;
    flex: none;
    position: relative;
    overflow: hidden;
    border-bottom: 1px solid #222;
    font-size: 7px;
    line-height: 10px;
    white-space: nowrap;
}
.ribbon {
    height: 5px;
    display: flex;
    gap: 98px;
    align-items: flex-end;
    padding-left: 60px;
    overflow: hidden;
    background-color: #f5f6f7;
    border-bottom: 1px solid #e3e3e3;
    color: #777;
}
.address {
    height: 20px;
    display: flex;
    align-items: center;
    gap: 1px;
    padding-left: 7px;
}
.crumbs {
    flex: 1;
    height: 13px;
    display: flex;
    align-items: center;
    border: 1px solid #e0e0e0;
}
.crumbs i {
    padding: 0 5px 1px;
    font-size: 9px;
    font-style: normal;
}
.mini {
    width: 9px;
    height: 10px;
    flex: none;
}
.explorer {
    display: flex;
    gap: 12px;
    padding-top: 2px;
}
.tree {
    width: 87px;
    padding-top: 8px;
    border-right: 1px solid #f3f3f3;
}
.tree ul {
    display: flex;
    flex-direction: column;
}
.tree li {
    flex: 1;
    display: flex;
    align-items: center;
    gap: 3px;
    padding-left: 18px;
}
.tree .top {
    padding-left: 14px;
}
.tree .picked {
    background-color: #d9d9d9;
}
.tree .quick {
    height: 68px;
}
.tree .single {
    height: 22px;
}
.tree .pc {
    height: 149px;
}
.count {
    padding: 53px 0 0 8px;
}
.files {
    align-self: flex-start;
    width: 300px;
    border-collapse: collapse;
    table-layout: fixed;
}
.files th, .files td {
    padding: 0;
    font-weight: normal;
    text-align: left;
    color: #888;
}
.files th {
    color: #5f6f8f;
    height: 16px;
    vertical-align: top;
}
.files th:first-child {
    width: 146px;
}
.files td:first-child {
    display: flex;
    align-items: center;
    gap: 2px;
    height: 12px;
    color: #000;
}
.props-win, .edit-win {
    position: absolute;
    background-color: #f0f0f0;
}
.props-win {
    left: 314px;
    top: 200px;
    width: 300px;
    height: 134px;
    padding: 3px;
    border: 1px solid #aaa;
}
.props-win div {
    height: 110px;
    background-color: #fff;
    border: 1px solid #ddd;
}
.edit-win {
    left: 279px;
    top: 0;
    width: 300px;
    height: 283px;
    border: 1px solid #e2a04a;
    box-shadow: 0 3px 8px rgba(0, 0, 0, 0.3);
}
.edit-win p {
    padding: 4px;
    height: 18px;
    background-color: #fff;
}
.edit-win ul {
    height: 219px;
    margin: 10px;
    padding-bottom: 3px;
    display: flex;
    flex-direction: column;
    background-color: #fff;
    border-bottom: 1px solid #99a;
}
.edit-win li {
    flex: 1;
    min-height: 0;
    padding-left: 4px;
    border-bottom: 1px solid #f0f0f0;
}
.edit-win .editing {
    width: 74px;
    padding-left: 3px;
    border: 1px solid #888;
    box-shadow: 4px 0 #2a8de8;
    line-height: 9px;
}

/* sidebar */
.sidebar {
    width: 276px;
    flex: none;
    display: flex;
    border-top: 2px solid #999;
    border-left: 1px solid #999;
    border-bottom: 1px solid #999;
}
.deck {
    flex: 1;
    min-width: 0;
    margin: 3px 0 2px 3px;
    border: 1px solid #ddd;
}
.deck-title {
    height: 26px;
    display: flex;
    align-items: center;
    justify-content: space-between;
    padding: 0 5px 4px 7px;
}
.deck-title b {
    padding-top: 4px;
}
.deck h2 {
    height: 26px;
    display: flex;
    justify-content: space-between;
    align-items: center;
    padding: 0 5px 4px 13px;
    font-size: 12px;
    background: linear-gradient(#dfdfdf, #efefef);
}
.deck h2 span {
    padding-top: 4px;
}
.more {
    width: 12px;
    height: 11px;
}
.row {
    display: flex;
    gap: 6px;
    padding-right: 6px;
    margin-bottom: 9px;
}
.fonts {
    gap: 7px;
    padding-right: 8px;
}
.grow {
    flex: 1;
    min-width: 0;
}
.deck h2 + .row {
    margin-top: 2px;
}
.side-size {
    width: 51px;
}
.group {
    height: 31px;
    display: flex;
    align-items: center;
    border: 1px solid #ddd;
    background: linear-gradient(#f5f5f5, #fff);
}
.end {
    justify-content: flex-end;
    gap: 7px;
    padding-right: 6px;
}
.wide {
    width: 54px;
    justify-content: space-around;
}
.pair {
    width: 40px;
    justify-content: space-around;
}
.spread {
    gap: 24px;
    margin-bottom: 10px;
}
.colors {
    gap: 6px;
    padding-right: 20px;
    margin-bottom: 3px;
}
.colors .font-color {
    margin-left: 10px;
}
.strike {
    font-size: 8px;
    font-weight: bold;
}
.bigA {
    font: bold 15px "Open Sans", sans-serif;
}
.medA {
    font: bold 12px "Open Sans", sans-serif;
}
.smallA {
    font: bold 10px "Open Sans", sans-serif;
}
.ab {
    font: 9px "Open Sans", sans-serif;
}
.north {
    font: bold 6px "Open Sans", sans-serif;
}
.deck h2 + .align-row {
    margin: 1px 0 5px;
    padding-right: 121px;
}
.align-row .end {
    gap: 12px;
}
.fill-row {
    gap: 19px;
    padding-right: 75px;
    margin-bottom: 2px;
}
.fill-row .end {
    padding-right: 2px;
}
.indent-label {
    padding-left: 121px;
}
.indent-row {
    gap: 61px;
    padding-right: 25px;
    margin: 1px 0 11px;
}
.indents {
    width: 84px;
    gap: 6px;
    justify-content: center;
}
.spins {
    justify-content: flex-end;
    align-items: center;
    margin-bottom: 8px;
}
.spin {
    height: 23px;
    display: flex;
    padding: 1px;
    border: 1px solid #ababb3;
    background-color: #fff;
}
.spin.fixed {
    width: 82px;
}
.spin input {
    flex: 1;
    min-width: 0;
    border: 0;
    padding: 0 2px;
    background: none;
}
.spin.grow input {
    padding-left: 24px;
}
.spin span {
    display: flex;
    flex-direction: column;
}
.spin span button {
    width: 15px;
    flex: 1;
    min-height: 0;
    border: 1px solid #adadad;
    background-color: #eee;
}
.deck .last {
    margin-top: 16px;
    border-bottom: 1px solid #ddd;
}
.tabs {
    width: 39px;
    margin-right: 1px;
    display: flex;
    flex-direction: column;
    align-items: center;
    gap: 4px;
    border-right: 1px solid #999;
}
.tabs button {
    width: 31px;
    height: 31px;
}
.tabs .tabs-menu {
    height: 37px;
    border-bottom: 1px solid #ddd;
}
.tabs .current {
    border: 1px solid #aaa;
    border-radius: 3px;
}

/* status bar */
.status {
    height: 22px;
    display: flex;
    align-items: flex-end;
    border-bottom: 2px solid #222;
    background-color: #efefef;
}
.status > span {
    height: 17px;
    padding-top: 1px;
    padding-left: 5px;
    border-right: 1px solid #999;
}
.status .s-page {
    width: 228px;
    padding-left: 10px;
}
.s-style {
    width: 209px;
}
.status .s-lang {
    width: 242px;
    padding-left: 0;
    text-align: center;
}
.s-mode {
    width: 45px;
}
.s-sel {
    width: 34px;
}
.status .s-mod {
    width: 16px;
    padding-left: 4px;
}
.s-sign {
    width: 29px;
}
.s-rest {
    flex: 1;
}
.status .s-view {
    width: 76px;
    display: flex;
    align-items: center;
    gap: 6px;
    padding-left: 7px;
}
.gray {
    color: #8492a3;
}
.blue {
    color: #2b5f9a;
}
.status .s-zoom {
    width: 143px;
    display: flex;
    align-items: center;
    gap: 5px;
}
.s-zoom input {
    width: 98px;
    height: 12px;
    margin: 0;
    appearance: none;
    background: linear-gradient(#777, #777) 19px 0 / 1px 12px no-repeat, linear-gradient(#888, #888) 0 5px / 100% 1px no-repeat;
}
.s-zoom input::-webkit-slider-thumb {
    appearance: none;
    width: 8px;
    height: 8px;
    border-radius: 50%;
    border: 1px solid #1f3c55;
    background-color: #5b8db5;
}
.status .s-percent {
    width: 45px;
    padding-left: 4px;
    border-right: 0;
}

/* dialogs */
.dialog {
    position: absolute;
    background-color: #f0f0f0;
}
.buttons {
    display: flex;
    justify-content: flex-end;
    gap: 8px;
}
.dialog .buttons button, .panel button {
    border: 1px solid #adadad;
    background-color: #e1e1e1;
}
.sysprops {
    left: 556px;
    bottom: 47px;
    width: 412px;
    padding: 300px 7px 8px 6px;
    border: 1px solid #aaa;
    box-shadow: 0 3px 12px rgba(0, 0, 0, 0.3);
    font-family: "Liberation Sans", Arial, sans-serif;
    font-size: 11px;
}
.panel {
    padding: 0 18px 28px 14px;
    display: flex;
    flex-direction: column;
    align-items: flex-end;
    gap: 14px;
    margin-right: 1px;
    margin-bottom: 8px;
    border: 1px solid #dcdcdc;
    background-color: #fff;
}
.box {
    width: 100%;
    padding: 20px 9px 10px;
    display: flex;
    justify-content: flex-end;
    border: 1px solid #dcdcdc;
}
.panel button {
    width: 73px;
    height: 21px;
}
.panel .env {
    width: 126px;
}
.sysprops .buttons button {
    width: 73px;
    height: 21px;
}
.sysprops .buttons button:disabled {
    background-color: #ccc;
    border-color: #bfbfbf;
    color: #888;
}
.envvars {
    left: 530px;
    top: 13px;
    width: 618px;
    border: 1px solid #dd9a43;
    box-shadow: 0 6px 22px rgba(0, 0, 0, 0.45);
}
.dialog-title {
    height: 30px;
    display: flex;
    align-items: center;
    justify-content: space-between;
    padding: 0 9px 0 8px;
    background-color: #fff;
}
.dialog-body {
    padding: 23px 12px 14px;
}
fieldset {
    min-width: 0;
    margin: 0 0 8px;
    padding: 8px 11px 14px 12px;
    border: 1px solid #dcdcdc;
}
fieldset + fieldset {
    padding-top: 9px;
}
legend {
    margin-left: -7px;
    padding: 0 3px;
}
.list {
    height: 156px;
    margin-bottom: 14px;
    padding: 2px 2px 2px 5px;
    display: flex;
    overflow: hidden;
    border: 1px solid #828790;
    background-color: #fff;
}
.list table {
    flex: 1;
    width: 100%;
    min-width: 0;
    align-self: flex-start;
    border-collapse: collapse;
    table-layout: fixed;
}
.list .name {
    width: 164px;
}
.list th, .list td {
    height: 19px;
    padding: 0 0 0 2px;
    font-weight: normal;
    text-align: left;
    white-space: nowrap;
}
.list th {
    height: 23px;
    border-right: 1px solid #e5e5e5;
}
.list th + th, .list td + td {
    padding-left: 6px;
}
.hover {
    background-color: #f0f0f0;
}
.selected {
    background-color: #3399ff;
    color: #fff;
}
.gutter {
    width: 17px;
    flex: none;
}
.bar {
    display: flex;
    flex-direction: column;
    background-color: #f0f0f0;
    margin-left: 1px;
    width: 16px;
}
.bar .thumb {
    height: 34px;
    margin: 6px 1px auto 0;
}
.envvars .buttons {
    gap: 9px;
}
.envvars .buttons button {
    width: 86px;
    height: 24px;
}
.envvars .confirm {
    padding: 9px 18px 0 0;
}
.envvars .buttons .default {
    border: 2px solid #0078d7;
}
.resize {
    position: absolute;
    right: 2px;
    bottom: 2px;
}
```
